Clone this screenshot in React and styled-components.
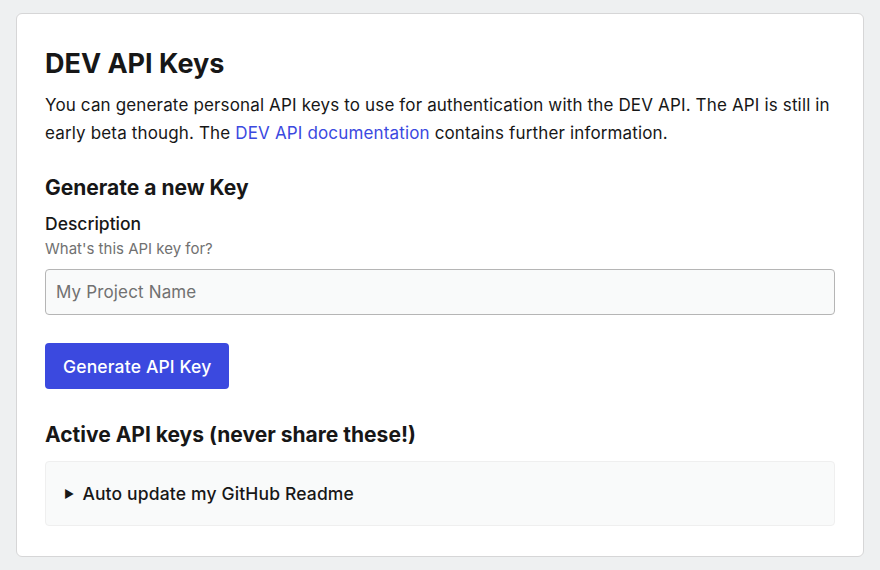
import React from "react";
import styled, { createGlobalStyle } from "styled-components";

const Global = createGlobalStyle`
  html, body { margin: 0; background: #eef0f1; }
  body { font-family: Inter, "Noto Sans", sans-serif; color: #171717; }
`;
const Page = styled.div`padding: 13px 16px 12px 16px;`;
const Card = styled.div`
  background: #fff; border: 1px solid #d6d6d7; border-radius: 6px;
  padding: 32px 28px 27px 28px; height: 544px; box-sizing: border-box;
`;
const Title = styled.h1`font-size: 27px; font-weight: 700; margin: 0 0 9px; line-height: 36px;`;
const Text = styled.p`font-size: 17px; letter-spacing: 0.15px; line-height: 28px; margin: 0 0 27px; color: #171717;`;
const Link = styled.a`color: #3b49df; text-decoration: none;`;
const H2 = styled.h2`font-size: 21px; font-weight: 700; margin: 0 0 ${p => p.$mb}px; line-height: 28px;`;
const Label = styled.div`font-size: 17.5px; font-weight: 500; line-height: 24px;`;
const Hint = styled.div`font-size: 15px; color: #717171; line-height: 20px; margin: 3px 0 10px;`;
const Input = styled.input`
  display: block; width: 100%; box-sizing: border-box; height: 46px;
  border: 1px solid #b5b5b5; border-radius: 4px; background: #f9fafa;
  padding: 0 10px; font-family: inherit; font-size: 17px; letter-spacing: 0.15px; margin-bottom: 28px;
  &::placeholder { color: #717171; }
`;
const Button = styled.button`
  background: #3b49df; color: #fff; border: none; border-radius: 4px;
  height: 46px; padding: 0 18px; font-family: inherit; font-size: 17.5px; letter-spacing: 0.15px; font-weight: 500;
  margin-bottom: 32px;
`;
const Details = styled.div`
  background: #f9fafa; border: 1px solid #efefef; border-radius: 4px;
  height: 65px; box-sizing: border-box; display: flex; align-items: center;
  padding-left: 18px; font-size: 17.5px; letter-spacing: 0.15px; font-weight: 500; gap: 8px;
`;
const Tri = styled.span`font-size: 11px;`;

export default function App() {
  return (
    <>
      <Global />
      <Page>
        <Card>
          <Title>DEV API Keys</Title>
          <Text>
            You can generate personal API keys to use for authentication with the DEV API. The API is still
            in early beta though. The <Link href="#">DEV API documentation</Link> contains further information.
          </Text>
          <H2 $mb={10}>Generate a new Key</H2>
          <Label>Description</Label>
          <Hint>What's this API key for?</Hint>
          <Input placeholder="My Project Name" />
          <Button>Generate API Key</Button>
          <H2 $mb={12}>Active API keys (never share these!)</H2>
          <Details><Tri>▶</Tri>Auto update my GitHub Readme</Details>
        </Card>
      </Page>
    </>
  );
}
